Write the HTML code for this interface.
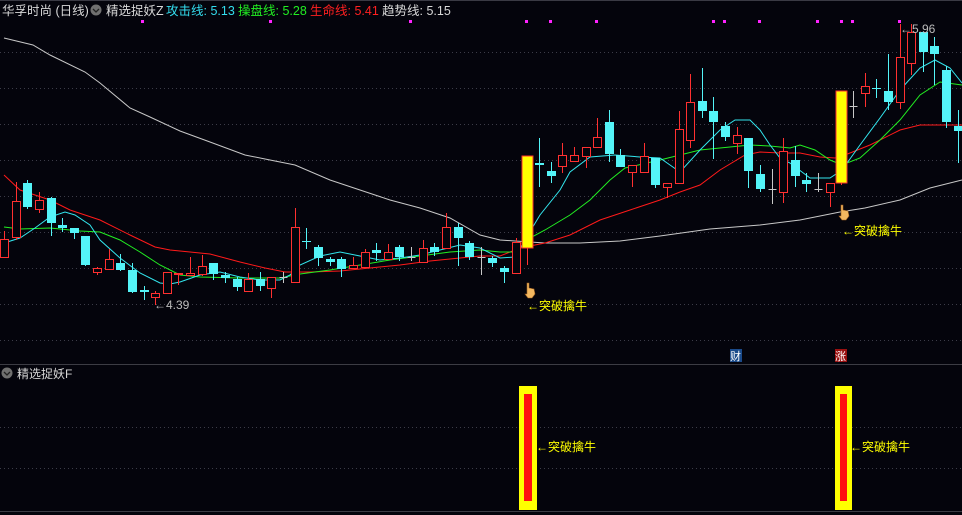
<!DOCTYPE html>
<html><head><meta charset="utf-8"><style>
html,body{margin:0;padding:0;background:#04040c;width:962px;height:515px;overflow:hidden}
svg{display:block}
text{font-family:"Liberation Sans","Noto Sans CJK SC",sans-serif}
</style></head><body>
<svg id="s" width="962" height="515" xmlns="http://www.w3.org/2000/svg">
<rect width="962" height="515" fill="#04040c"/>
<line x1="0" y1="0.5" x2="962" y2="0.5" stroke="#3a3a44"/>
<g id="grid" stroke="#3c3c48" stroke-dasharray="1,3"></g>
<line x1="0" y1="364.5" x2="962" y2="364.5" stroke="#3c3c44"/>
<line x1="0" y1="511.5" x2="962" y2="511.5" stroke="#3c3c44"/>
<polyline fill="none" stroke="#c8c8c8" stroke-width="1" points="4,38 33,45 50,55 85,72 100,83 130,108 150,117 180,131 210,142 245,155 270,160 295,165 330,180 360,190 390,200 420,208 450,218 480,235 500,240 545,243 580,243 620,241 660,236 710,229 760,225 800,220 840,212 865,208 900,200 930,188 962,180"/>
<polyline fill="none" stroke="#ff1a1a" stroke-width="1" points="4,175 20,190 50,200 70,210 100,220 130,235 155,247 170,250 210,254 240,262 265,268 285,272 310,272 340,271 370,268 400,265 430,261 460,258 480,256 500,256 520,248 545,243 570,235 600,220 630,210 660,200 680,192 700,185 720,170 745,155 760,152 780,153 800,153 820,157 835,158 845,155 870,145 900,130 920,125 940,125 962,125"/>
<polyline fill="none" stroke="#22ee22" stroke-width="1" points="4,227 20,229 50,228 80,231 100,232 120,240 140,252 160,265 180,275 200,277 240,278 280,278 300,274 330,270 360,265 390,260 420,256 450,252 480,250 500,252 515,252 530,238 545,230 570,215 590,200 610,180 625,168 660,160 700,150 730,147 750,145 770,146 790,148 800,145 815,150 830,160 842,165 860,158 880,140 900,120 920,95 940,82 962,85"/>
<polyline fill="none" stroke="#33e6ee" stroke-width="1" points="4,243 20,238 35,228 50,217 65,212 75,215 90,225 100,240 120,258 140,273 160,283 170,284 180,282 200,275 220,272 240,277 260,280 280,280 290,275 300,265 320,256 340,252 360,256 380,260 400,258 420,255 440,250 460,245 480,248 500,258 515,257 525,240 540,215 560,190 570,172 590,157 615,155 640,157 660,158 670,165 680,172 700,150 720,130 735,120 750,120 760,130 770,145 780,158 790,163 810,178 830,178 842,170 860,145 880,118 900,90 920,68 935,60 950,68 962,83"/>
<g id="c"></g>
<g id="dots" fill="#ff22ff"></g>
<text x="2" y="15" font-size="12.5" fill="#d8d8d8">华孚时尚 (日线)</text>
<circle cx="96" cy="10" r="5.5" fill="#707070"/>
<path d="M93,9 L96,12 L99,9" stroke="#222" stroke-width="1.3" fill="none"/>
<text x="106" y="15" font-size="12.5" fill="#d8d8d8">精选捉妖Z</text>
<text x="166" y="15" font-size="12.5" fill="#33ddee">攻击线: 5.13</text>
<text x="238" y="15" font-size="12.5" fill="#22ee22">操盘线: 5.28</text>
<text x="310" y="15" font-size="12.5" fill="#ff2020">生命线: 5.41</text>
<text x="382" y="15" font-size="12.5" fill="#d8d8d8">趋势线: 5.15</text>
<text x="154" y="309" font-size="12" fill="#bbbbbb">←4.39</text>
<text x="900" y="33" font-size="12" fill="#bbbbbb">←5.96</text>
<text x="527" y="310" font-size="12" fill="#ffff00">←突破擒牛</text>
<text x="842" y="235" font-size="12" fill="#ffff00">←突破擒牛</text>
<g fill="#f4b860" stroke="#a06020" stroke-width="0.6">
<path d="M527,283 l2,0 l0,5 l5,1 l1,5 l-3,4 l-4,0 l-3,-4 l2,0 z"/>
<path d="M841,205 l2,0 l0,5 l5,1 l1,5 l-3,4 l-4,0 l-3,-4 l2,0 z"/>
</g>
<rect x="730" y="349" width="12" height="13" fill="#1a4a8a"/>
<text x="730" y="360" font-size="11" fill="#ffffff">财</text>
<rect x="835" y="349" width="12" height="13" fill="#9a1010"/>
<text x="835" y="360" font-size="11" fill="#ffffff">涨</text>
<circle cx="7" cy="373" r="5.5" fill="#707070"/>
<path d="M4,372 L7,375 L10,372" stroke="#222" stroke-width="1.3" fill="none"/>
<text x="17" y="378" font-size="12" fill="#d8d8d8">精选捉妖F</text>
<line x1="0" y1="427.5" x2="962" y2="427.5" stroke="#3c3c48" stroke-dasharray="1,3"/>
<line x1="0" y1="468.5" x2="962" y2="468.5" stroke="#3c3c48" stroke-dasharray="1,3"/>
<rect x="519" y="386" width="18" height="124" fill="#ffff00"/>
<rect x="524" y="394" width="8" height="107" fill="#ff1010"/>
<rect x="835" y="386" width="17" height="124" fill="#ffff00"/>
<rect x="840" y="394" width="7" height="107" fill="#ff1010"/>
<text x="536" y="451" font-size="12" fill="#ffff00">←突破擒牛</text>
<text x="850" y="451" font-size="12" fill="#ffff00">←突破擒牛</text>
</svg>
<script>
var NS="http://www.w3.org/2000/svg";
function el(p,t,a){var e=document.createElementNS(NS,t);for(var k in a)e.setAttribute(k,a[k]);p.appendChild(e);return e;}
var g=document.getElementById('grid');
[52,88,124,160,196,232,268,304,340].forEach(function(y){el(g,'line',{x1:0,y1:y+.5,x2:962,y2:y+.5});});
var d=document.getElementById('dots');
[142,270,410,526,550,596,713,724,759,817,841,852,899].forEach(function(x){el(d,'rect',{x:x-1,y:20,width:3,height:3});});
// type, top, bottom, high, low
var C=[
['r',239,257,231,257],['r',201,237,182,240],['c',183,207,180,209],['r',200,209,192,213],['c',198,223,197,236],
['c',225,228,218,232],['c',228,233,228,239],['c',236,265,236,266],['r',268,272,267,275],['r',259,269,249,269],
['c',263,270,254,271],['c',270,292,263,293],['c',290,292,286,300],['r',293,297,291,305],['r',272,293,272,293],
['r',273,274,273,285],['r',273,275,257,275],['r',266,274,255,276],['c',263,274,263,280],['c',275,278,272,283],
['c',279,287,277,291],['r',279,291,273,291],['c',279,286,272,291],['r',277,288,277,298],['w',277,278,272,283],
['r',227,282,208,282],['c',241,242,228,249],['c',247,258,245,266],['c',259,262,257,266],['c',259,269,257,277],
['r',265,268,257,268],['r',252,267,249,267],['c',250,253,243,261],['r',252,259,244,259],['c',247,257,245,261],
['w',257,258,247,261],['r',248,262,240,262],['c',247,252,243,256],['r',227,248,213,248],['c',227,238,223,266],
['c',243,257,241,260],['w',257,258,247,275],['c',258,263,256,267],['c',268,272,266,283],['r',242,273,238,273],
['y',156,248,156,265],['c',163,165,138,187],['c',171,176,162,183],['r',155,166,143,173],['r',155,161,147,161],
['r',147,156,147,168],['r',137,147,118,147],['c',122,154,110,162],['c',155,167,149,167],['r',165,172,165,187],
['r',156,172,143,172],['c',158,185,158,188],['r',183,187,183,198],['r',129,183,111,183],['r',102,140,74,148],
['c',101,111,68,118],['c',111,122,97,159],['c',126,137,122,141],['r',135,143,127,154],['c',138,171,138,188],
['c',174,189,165,192],['w',189,190,169,204],['r',151,192,138,203],['c',160,176,146,187],['c',180,184,173,192],
['w',189,190,173,192],['r',183,192,183,207],['y',91,183,91,185],['w',106,107,91,118],['r',86,93,73,107],
['c',88,89,79,98],['c',91,102,54,110],['r',57,102,24,109],['r',32,63,24,75],['c',32,52,32,72],
['c',46,54,37,85],['c',70,122,66,128],['c',126,131,110,163]];
var cg=document.getElementById('c');
C.forEach(function(c,i){
 var x=Math.round(4+11.63*i)+.5;var t=c[0];
 var col=t=='r'?'#ff3030':t=='c'?'#54f4f8':t=='w'?'#c8c8c8':'#ff3030';
 el(cg,'line',{x1:x,y1:c[3],x2:x,y2:c[4],stroke:col});
 if(t=='y'){el(cg,'rect',{x:x-5.5,y:c[1],width:11,height:c[2]-c[1],fill:'#ffff00',stroke:'#ff3030'});}
 else if(t=='r'){el(cg,'rect',{x:x-4,y:c[1]+.5,width:8,height:Math.max(1,c[2]-c[1]),fill:'#04040c',stroke:col});}
 else if(t=='c'){var h=c[2]-c[1];el(cg,'rect',{x:x-4.5,y:c[1],width:9,height:Math.max(1,h),fill:col});}
 else {el(cg,'line',{x1:x-4,y1:c[1]+.5,x2:x+4,y2:c[1]+.5,stroke:col});}
});
</script>
</body></html>
